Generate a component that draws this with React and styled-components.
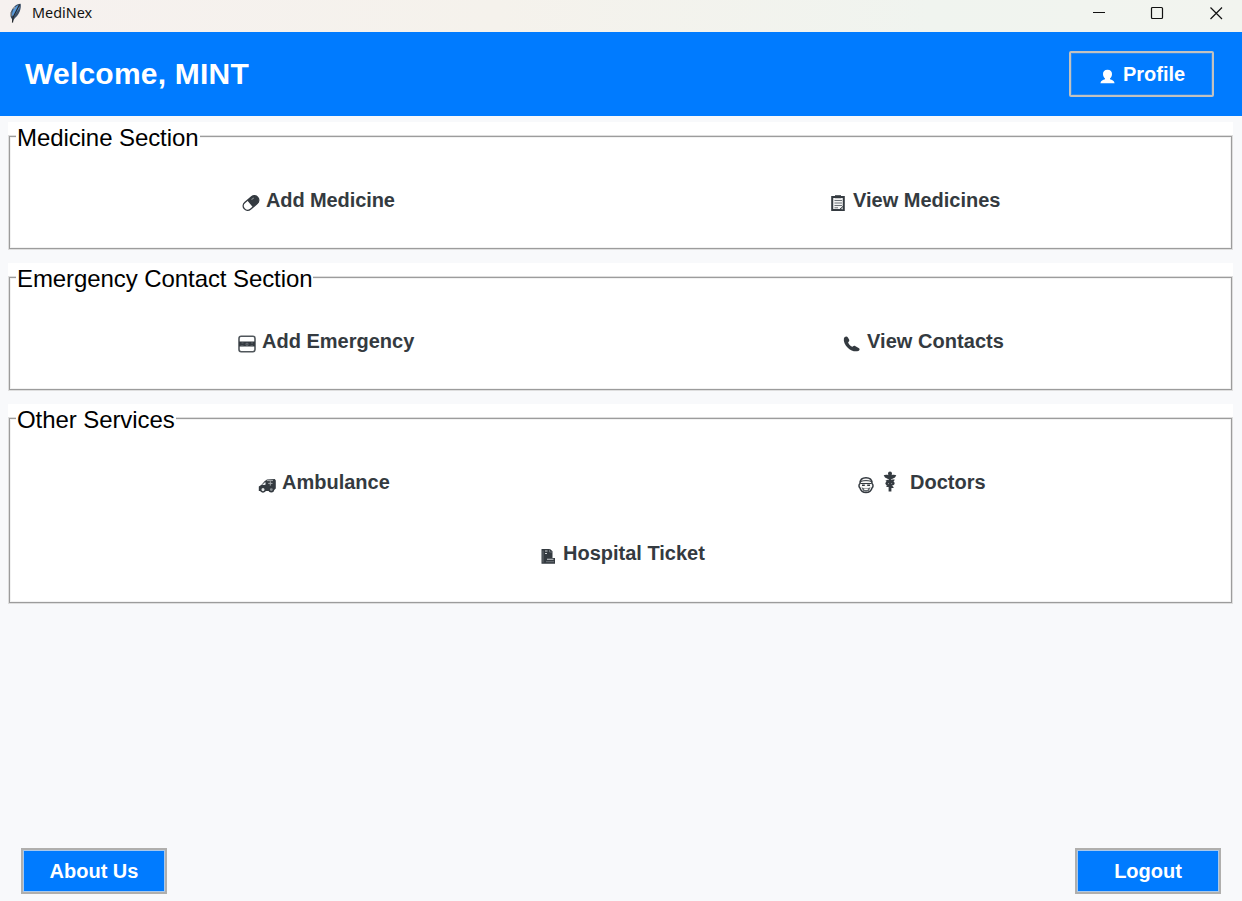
import React from "react";
import styled, { createGlobalStyle } from "styled-components";

const GlobalStyle = createGlobalStyle`
  * { box-sizing: border-box; }
  body { margin: 0; background: #f8f9fb; font-family: "Liberation Sans", Arial, sans-serif; }
`;

const Window = styled.div`
  display: flex;
  flex-direction: column;
  width: 1242px;
  height: 901px;
  overflow: hidden;
  background: #f8f9fb;
`;

const TitleBar = styled.div`
  display: flex;
  align-items: center;
  height: 32px;
  flex: none;
  padding: 0 17px 6px 7px;
  background: linear-gradient(90deg, #f6f1ef 0%, #f5f2ec 40%, #f0f4ef 75%, #f2f4ef 100%);
`;

const AppName = styled.span`
  flex: 1;
  margin-left: 9px;
  font: 14.4px/20px "Noto Sans", sans-serif;
  color: #111;
`;

const WindowControls = styled.div`
  display: flex;
  gap: 42px;
  & svg { display: block; width: 17px; height: 17px; }
`;

const Header = styled.header`
  display: flex;
  align-items: center;
  justify-content: space-between;
  flex: none;
  height: 83.5px;
  padding: 0 28px 0 25px;
  background: #007bff;
`;

const Welcome = styled.h1`
  margin: 1px 0 0;
  color: #fff;
  font-size: 30px;
  line-height: 34px;
  letter-spacing: 0.22px;
`;

const Button = styled.button`
  display: flex;
  align-items: center;
  justify-content: center;
  gap: 8px;
  width: ${(p) => (p.$outlined ? 145 : 146)}px;
  height: 46px;
  padding: ${(p) => (p.$outlined ? "0 0 0 2px" : "0")};
  border: ${(p) => (p.$outlined ? "2px solid #c3c2c0" : "2px solid #b0afad")};
  border-radius: ${(p) => (p.$outlined ? 2 : 0)}px;
  box-shadow: inset 0 0 0 1px ${(p) => (p.$outlined ? "#2b8af0" : "#a9c9ec")};
  background: #007bff;
  color: #fff;
  font: bold 20px/24px "Liberation Sans", Arial, sans-serif;
  & svg { margin-top: 5px; }
`;

const Main = styled.main`
  display: flex;
  flex-direction: column;
  flex: 1;
  gap: 13px;
  padding: 6.5px 9px 0 8px;
`;

const Panel = styled.section`
  height: ${(p) => p.$height}px;
  background: #fff;
`;

const Frame = styled.div`
  display: flex;
  flex-direction: column;
  height: 100%;
  padding: 0 1px 1px;
`;

const LegendRow = styled.div`
  display: flex;
  height: 14px;
  flex: none;
  align-items: flex-end;
`;

const Legend = styled.h2`
  position: relative;
  margin: 0 0 -16px 7px;
  padding: 0 1px;
  background: #fff;
  font-size: 24px;
  font-weight: normal;
  line-height: 28px;
  letter-spacing: -0.08px;
  color: #000;
`;

const Content = styled.div`
  flex: 1;
  padding-top: 51px;
  border: 1px solid #9c9c9c;
  box-shadow: inset 0 0 0 1px #f2f2f2, 0 0 0 1px #dedede;
`;

const Row = styled.div`
  display: grid;
  grid-template-columns: 610px 1fr;
  height: 24px;
  & + & { margin-top: 47px; }
`;

const Action = styled.div`
  display: flex;
  align-items: flex-start;
  margin-left: ${(p) => p.$indent}px;
  color: #343a40;
  font-size: 20px;
  font-weight: bold;
  line-height: 24px;
  white-space: nowrap;
  & svg { flex: none; margin-top: 6px; }
`;

const ActionLabel = styled.span`
  margin-left: ${(p) => p.$gap}px;
  letter-spacing: ${(p) => p.$tracking || 0}px;
`;

const StaffSlot = styled.span`
  display: flex;
  margin: -5px 0 0 9px;
`;

const Footer = styled.footer`
  display: flex;
  justify-content: space-between;
  flex: none;
  padding: 0 21px 7px 21px;
`;

const Feather = () => (
  <svg width="16" height="22" viewBox="0 0 16 22">
    <path d="M5.500 21 5 17C2.500 14.500 3 9 7 5 9 3 11 1.800 13.700 1.800 14.500 7 12 13 8 16L6.500 18Z" fill="#3d5068" />
    <path d="M12 3C8 4 5 8.500 5 13L6.500 15 12.500 6Z" fill="#5a9ada" />
    <path d="M12.600 2.500 6 15.500 5.500 20.500" stroke="#26292d" strokeWidth="1.200" fill="none" />
    <path d="M4 14 3.800 10M8 5 6.500 7" stroke="#a6a29d" strokeWidth="1" />
  </svg>
);

const ProfileIcon = () => (
  <svg width="15" height="15" viewBox="0 0 15 15" fill="#fff">
    <path d="M7.500.8C4.400.8 3 2.600 3 5 3 7 4 8.700 5 9.500V10.200C3 10.700.8 11.400.4 14.200H14.600C14.200 11.400 12 10.700 10 10.200V9.500C11 8.700 12 7 12 5 12 2.600 10.600.8 7.500.8Z" />
  </svg>
);

const PillIcon = () => (
  <svg width="18" height="18" viewBox="0 0 18 18">
    <g transform="rotate(-40 9 9)">
      <rect x=".2" y="4.600" width="17.600" height="8.800" rx="4.400" fill="#fff" stroke="#343a40" strokeWidth="1.400" />
      <path d="M7.800 4.600H13.400A4.400 4.400 0 0 1 13.400 13.400H7.800Z" fill="#343a40" />
      <path d="M11.500 6.800H14.500" stroke="#8e9296" strokeWidth="1" />
    </g>
  </svg>
);

const ClipboardIcon = () => (
  <svg width="16" height="18" viewBox="0 0 16 18">
    <path d="M2.200 3H13.800V16H2.200Z" fill="#f2f2f2" stroke="#343a40" strokeWidth="2" />
    <path d="M5 1.200H11V4.200H5Z" fill="#343a40" />
    <path d="M4.500 6.500H12M4.500 9H12M4.500 11.500H12M4.500 13.800H8" stroke="#6b7177" strokeWidth="1" />
    <path d="M9.500 15.500 13.500 12V16Z" fill="#b9bcbe" stroke="#343a40" strokeWidth="1" />
  </svg>
);

const SosIcon = () => (
  <svg width="18" height="18" viewBox="0 0 18 18">
    <rect x="1" y="1.200" width="16" height="15.500" rx="2.200" fill="#fff" stroke="#50565b" strokeWidth="1.600" />
    <path d="M1 6.500H17V11.500H1Z" fill="#343a40" />
    <path d="M2.500 10.800H5.500M5.500 8H3.500M8 8.300H10V10.300H8ZM12.500 10.800H15M15 8H13" stroke="#777d82" strokeWidth=".7" fill="none" />
  </svg>
);

const PhoneIcon = () => (
  <svg width="18" height="18" viewBox="0 0 18 18" fill="#343a40">
    <path d="M.9 3.500C1.300 1.500 3.900.8 4.900 2.400L6.200 4.800C6.600 6 5.800 6.800 5.100 7.400 6 9.500 7.600 10.900 9.500 11.800 10.500 11 11.300 10.500 12.500 11.200L16 13.200C17.200 14.200 16.500 15.400 15.300 16 11.800 17 8 15.800 5 13 1.900 10.100.3 6.500.9 3.500Z" />
  </svg>
);

const AmbulanceIcon = () => (
  <svg width="19" height="18" viewBox="0 0 19 18">
    <path d="M.8 14V10.500L3.500 8.800 6.500 5.200 9 3.600 16.800 3 17.800 4.500V12.500L15 15H.8Z" fill="#343a40" />
    <path d="M4 9 6.600 6.400 7.800 6.500 7.300 9Z" fill="#e4e6e8" />
    <path d="M12.300 5.200V9.600M10.200 7.400H14.500M8.800 4.600H15" stroke="#a5a9ac" strokeWidth="1" />
    <circle cx="5" cy="13.600" r="2.300" fill="#e5e7e8" stroke="#343a40" strokeWidth="1.500" />
    <circle cx="13.300" cy="13.600" r="2.200" fill="#8b9094" stroke="#343a40" strokeWidth="1.500" />
  </svg>
);

const DoctorFaceIcon = () => (
  <svg width="16" height="18" viewBox="0 0 16 18" fill="none" stroke="#343a40">
    <path d="M2 7.500C.5 8.800.8 11 2 12 2.800 15 5 16.500 8 16.500S13.200 15 14 12C15.200 11 15.500 8.800 14 7.500 14 3.500 12 1.800 8 1.800S2 3.500 2 7.500Z" strokeWidth="1.500" fill="#f7f7f7" />
    <path d="M2.800 5.500C5 4.300 11 4.300 13.200 5.500M2.500 7.500H13.500" strokeWidth="1" />
    <path d="M4 9.300H6.800M9.200 9.300H12" strokeWidth="1.600" />
    <path d="M3.500 11.200 6.500 12.400H9.500L12.500 11.200 11 14.800 8 15.800 5 14.800Z" fill="#5c6267" stroke="none" />
    <path d="M6.200 13.500H9.800" stroke="#fff" strokeWidth="1.100" />
  </svg>
);

const MedicalStaffIcon = () => (
  <svg width="14" height="22" viewBox="0 0 14 22" fill="none" stroke="#343a40">
    <path d="M7 2V20.500" strokeWidth="2.800" />
    <circle cx="7" cy="2.500" r="2" fill="#343a40" stroke="none" />
    <path d="M.7 4.200C3 3 5.500 4 7 4.500 8.500 4 11 3 13.300 4.200L12 6.500 9 8H5L2 6.500Z" fill="#343a40" stroke="none" />
    <path d="M3.500 9.300C4.500 11.500 10.500 9.500 10.500 12.300 10.500 14.500 4.500 13.500 4.500 16M10.500 8.500C10.500 11 3.500 10.300 3.500 12.500 4 15 9.500 14.500 9.500 17" strokeWidth="2.300" />
  </svg>
);

const TicketIcon = () => (
  <svg width="16" height="18" viewBox="0 0 16 18">
    <path d="M1.500 2H10L12.500 4.300V11H15V16.700H1.500Z" fill="#343a40" />
    <path d="M3 3.500V15.500" stroke="#777c81" strokeWidth=".8" />
    <path d="M5 4H7.500M5 6.500H7M7 12.300H13.500" stroke="#cfd2d4" strokeWidth="1.100" />
    <path d="M6 14.700H14M9.500 2.500V5H12" stroke="#858a8f" strokeWidth=".7" fill="none" />
  </svg>
);

const Section = ({ title, height, children }) => (
  <Panel $height={height}>
    <Frame>
      <LegendRow>
        <Legend>{title}</Legend>
      </LegendRow>
      <Content>{children}</Content>
    </Frame>
  </Panel>
);

export default function App() {
  return (
    <>
      <GlobalStyle />
      <Window>
        <TitleBar>
          <Feather />
          <AppName>MediNex</AppName>
          <WindowControls>
            <svg viewBox="0 0 17 17"><path d="M3 7.500H15" stroke="#111" /></svg>
            <svg viewBox="0 0 17 17"><rect x="2.500" y="2.500" width="11" height="11" rx="1" fill="none" stroke="#111" strokeWidth="1.200" /></svg>
            <svg viewBox="0 0 17 17"><path d="M2.500 2.500 14 14M14 2.500 2.500 14" stroke="#111" strokeWidth="1.200" /></svg>
          </WindowControls>
        </TitleBar>
        <Header>
          <Welcome>Welcome, MINT</Welcome>
          <Button $outlined><ProfileIcon />Profile</Button>
        </Header>
        <Main>
          <Section title="Medicine Section" height={128}>
            <Row>
              <Action $indent={232}><PillIcon /><ActionLabel $gap={6} $tracking={-0.1}>Add Medicine</ActionLabel></Action>
              <Action $indent={210}><ClipboardIcon /><ActionLabel $gap={7}>View Medicines</ActionLabel></Action>
            </Row>
          </Section>
          <Section title="Emergency Contact Section" height={128}>
            <Row>
              <Action $indent={228}><SosIcon /><ActionLabel $gap={6}>Add Emergency</ActionLabel></Action>
              <Action $indent={223}><PhoneIcon /><ActionLabel $gap={6} $tracking={0.05}>View Contacts</ActionLabel></Action>
            </Row>
          </Section>
          <Section title="Other Services" height={199.5}>
            <Row>
              <Action $indent={248}><AmbulanceIcon /><ActionLabel $gap={5}>Ambulance</ActionLabel></Action>
              <Action $indent={238}>
                <DoctorFaceIcon />
                <StaffSlot><MedicalStaffIcon /></StaffSlot>
                <ActionLabel $gap={13}>Doctors</ActionLabel>
              </Action>
            </Row>
            <Row>
              <Action $indent={530}><TicketIcon /><ActionLabel $gap={7}>Hospital Ticket</ActionLabel></Action>
            </Row>
          </Section>
        </Main>
        <Footer>
          <Button>About Us</Button>
          <Button>Logout</Button>
        </Footer>
      </Window>
    </>
  );
}
